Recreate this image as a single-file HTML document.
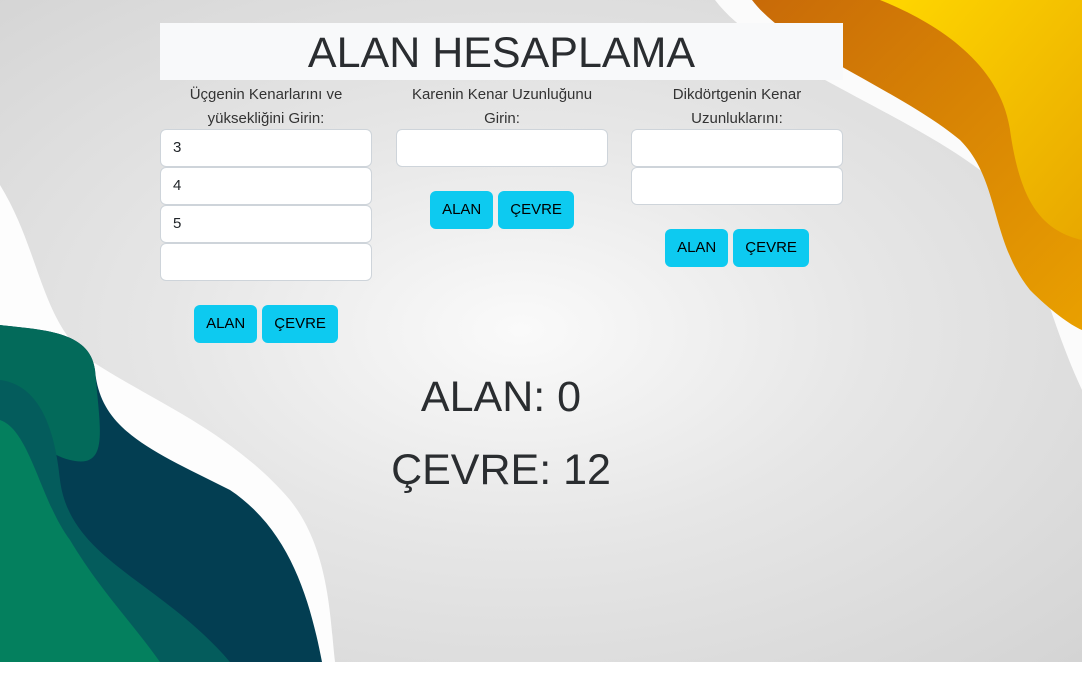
<!DOCTYPE html>
<html><head><meta charset="utf-8"><style>
*{box-sizing:border-box}
body{margin:0;width:1082px;height:675px;background:#fff;font-family:"Liberation Sans",sans-serif;position:relative;overflow:hidden}
#bg{position:absolute;left:0;top:0;width:1082px;height:662px;background:radial-gradient(ellipse at 520px 330px,#fafafa 0%,#e6e6e6 45%,#d4d4d4 100%)}
svg{position:absolute;left:0;top:0}
.title{position:absolute;left:160px;top:23px;width:683px;height:57px;background:#f8f9fa;text-align:center;font-size:43px;line-height:60px;color:#2a2d30;font-weight:300}
.col{position:absolute;top:83px;width:212px;text-align:center;color:#212529}
.lbl{font-size:15px;line-height:24px;height:46px;color:#333}
.in{height:38px;background:#fff;border:1px solid #ced4da;border-radius:6px;text-align:left;padding:0 12px;font-size:15px;line-height:36px;color:#212529}
.btns{margin-top:24px;display:flex;justify-content:center;gap:5px}
.b{height:38px;background:#0dcaf0;border-radius:6px;font-size:15px;line-height:38px;padding:0 12px;color:#000}
.res{position:absolute;left:0;width:1002px;text-align:center;font-size:43px;color:#2a2d30;font-weight:300}
</style></head><body>
<div id="bg"></div>
<svg width="1082" height="662">
<defs>
<linearGradient id="g1" x1="0" y1="0" x2="1" y2="1"><stop offset="0" stop-color="#c86a08"/><stop offset="1" stop-color="#e9a000"/></linearGradient>
<linearGradient id="g2" x1="0" y1="0" x2="1" y2="1"><stop offset="0" stop-color="#ffd700"/><stop offset="1" stop-color="#e8a800"/></linearGradient>
</defs>
<path d="M715 0 C760 60 900 110 980 170 C1030 210 1040 300 1082 390 L1082 0Z" fill="#fbfbfb"/>
<path d="M752 0 C790 50 900 90 960 140 C1000 180 990 240 1030 290 C1050 310 1070 325 1082 330 L1082 0Z" fill="url(#g1)"/>
<path d="M880 0 C930 20 1000 60 1010 130 C1020 200 1040 230 1082 240 L1082 0Z" fill="url(#g2)"/>
<path d="M0 185 C40 250 40 320 90 360 C150 400 230 430 290 500 C330 550 330 620 335 662 L0 662Z" fill="#fdfdfd"/>
<path d="M0 325 C40 330 90 330 95 370 C100 430 150 450 230 490 C290 530 310 600 322 662 L0 662Z" fill="#033e52"/>
<path d="M0 325 C40 330 90 330 95 370 C100 430 110 470 70 460 C30 450 0 400 0 380Z" fill="#036a5a"/>
<path d="M0 380 C40 385 55 430 60 480 C70 560 160 580 230 662 L0 662Z" fill="#045c5c"/>
<path d="M0 420 C30 430 40 500 70 540 C100 590 130 620 160 662 L0 662Z" fill="#04805e"/>
</svg>
<div class="title">ALAN HESAPLAMA</div>
<div class="col" style="left:160px">
<div class="lbl">Üçgenin Kenarlarını ve yüksekliğini Girin:</div>
<div class="in">3</div><div class="in">4</div><div class="in">5</div><div class="in"></div>
<div class="btns"><div class="b">ALAN</div><div class="b">ÇEVRE</div></div>
</div>
<div class="col" style="left:396px">
<div class="lbl">Karenin Kenar Uzunluğunu Girin:</div>
<div class="in"></div>
<div class="btns"><div class="b">ALAN</div><div class="b">ÇEVRE</div></div>
</div>
<div class="col" style="left:631px">
<div class="lbl">Dikdörtgenin Kenar Uzunluklarını:</div>
<div class="in"></div><div class="in"></div>
<div class="btns"><div class="b">ALAN</div><div class="b">ÇEVRE</div></div>
</div>
<div class="res" style="top:373px">ALAN: 0</div>
<div class="res" style="top:446px">ÇEVRE: 12</div>
</body></html>
